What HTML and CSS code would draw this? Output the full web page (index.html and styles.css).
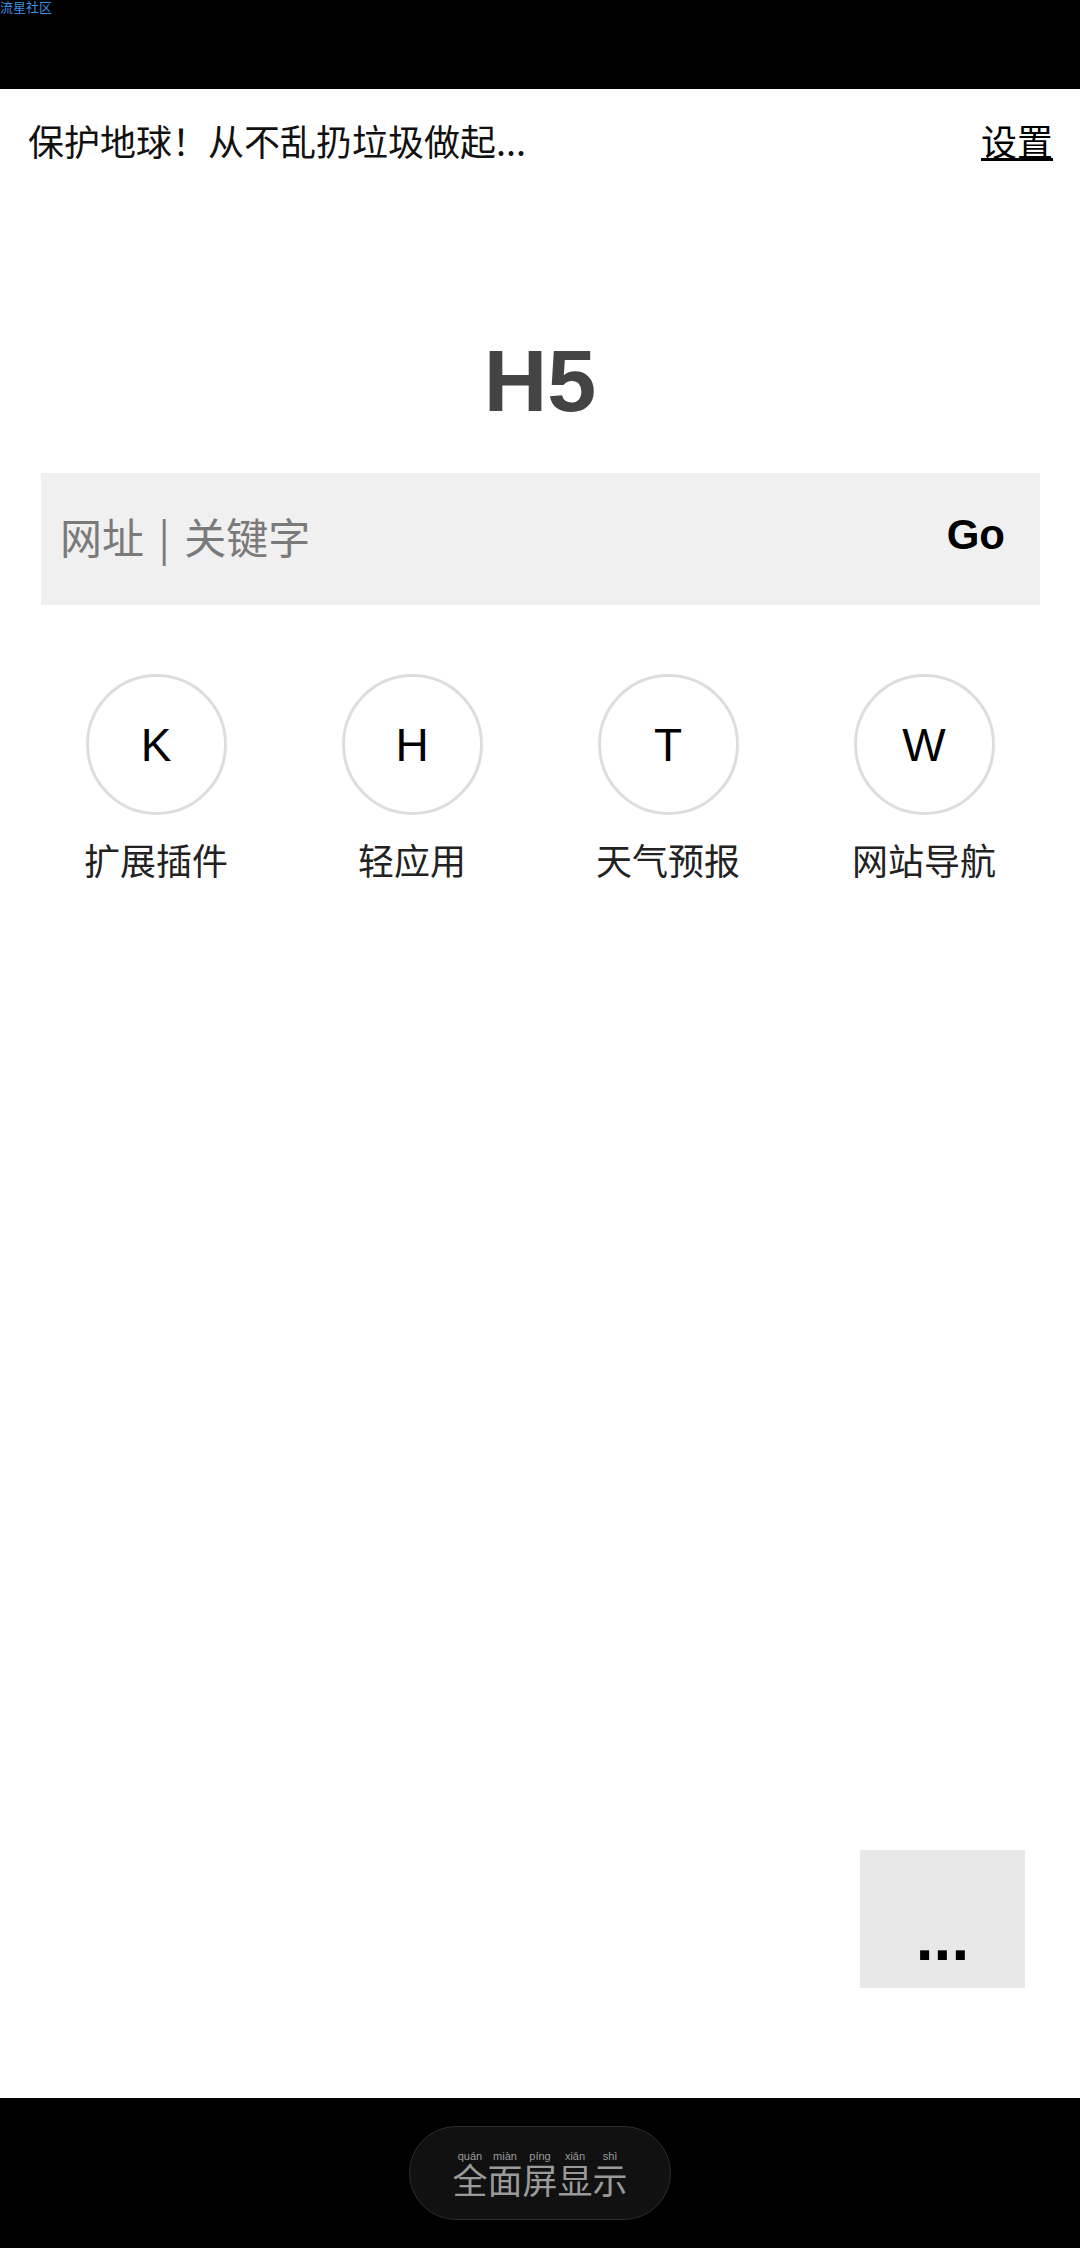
FILE: index.html
```html
<!DOCTYPE html>
<html lang="zh-CN">

<head>
    <meta charset="UTF-8">
    <meta name="viewport" content="width=device-width, initial-scale=1.0">
    <title>H5</title>
    <link rel="stylesheet" href="styles.css">
</head>

<body>
    <div class="status-bar">
        <span class="watermark">流星社区</span>
    </div>
    <div class="page">
        <div class="top-bar">
            <span class="slogan">保护地球！从不乱扔垃圾做起...</span>
            <a href="#" class="settings">设置</a>
        </div>
        <h1 class="logo">H5</h1>
        <form action="" class="search">
            <input type="text" class="search-input" placeholder="网址 | 关键字">
            <button class="search-go">Go</button>
        </form>
        <div class="shortcuts">
            <a href="#" class="shortcut">
                <span class="shortcut-icon">K</span>
                <span class="shortcut-name">扩展插件</span>
            </a>
            <a href="#" class="shortcut">
                <span class="shortcut-icon">H</span>
                <span class="shortcut-name">轻应用</span>
            </a>
            <a href="#" class="shortcut">
                <span class="shortcut-icon">T</span>
                <span class="shortcut-name">天气预报</span>
            </a>
            <a href="#" class="shortcut">
                <span class="shortcut-icon">W</span>
                <span class="shortcut-name">网站导航</span>
            </a>
        </div>
        <div class="more">...</div>
    </div>
    <div class="nav-bar">
        <div class="fullscreen">
            <span class="py"><span class="py-top">quán</span><span class="py-char">全</span></span>
            <span class="py"><span class="py-top">miàn</span><span class="py-char">面</span></span>
            <span class="py"><span class="py-top">píng</span><span class="py-char">屏</span></span>
            <span class="py"><span class="py-top">xiǎn</span><span class="py-char">显</span></span>
            <span class="py"><span class="py-top">shì</span><span class="py-char">示</span></span>
        </div>
    </div>
</body>

</html>
```

FILE: styles.css
```css
* {
    box-sizing: border-box;
}

body {
    margin: 0;
    width: 1080px;
    background: #fff;
    font-family: "Noto Sans CJK SC", "Noto Sans", sans-serif;
}

.status-bar {
    height: 89px;
    background: #000;
}

.watermark {
    display: block;
    font-size: 13px;
    line-height: 13px;
    color: #3d8fe0;
}

.page {
    height: 2009px;
    display: flex;
    flex-direction: column;
}

.top-bar {
    height: 102px;
    padding: 0 27px 0 28px;
    display: flex;
    justify-content: space-between;
    align-items: center;
    font-size: 36px;
}

.slogan {
    color: #111;
}

.settings {
    color: #000;
    text-decoration: underline;
}

.logo {
    margin: 140px 0 42px;
    font: 700 88px/100px "Liberation Sans", sans-serif;
    text-align: center;
    color: #444;
}

.search {
    height: 132px;
    margin: 0 40px 0 41px;
    padding: 0 35px 8px 19px;
    display: flex;
    align-items: center;
    background: #f0f0f0;
}

.search-input {
    flex: 1;
    border: none;
    outline: none;
    background: transparent;
    font-family: "Noto Sans CJK SC", sans-serif;
    font-size: 42px;
    color: #333;
    padding: 0;
}

.search-input::placeholder {
    color: #7a7a7a;
    word-spacing: 5px;
}

.search-go {
    border: none;
    background: transparent;
    padding: 0;
    font: 700 42px "Liberation Sans", sans-serif;
    color: #000;
}

.shortcuts {
    margin-top: 69px;
    padding: 0 28px;
    display: grid;
    grid-template-columns: repeat(4, 1fr);
}

.shortcut {
    display: flex;
    flex-direction: column;
    align-items: center;
    text-decoration: none;
    color: #222;
}

.shortcut-icon {
    width: 141px;
    height: 141px;
    border: 3px solid #ddd;
    border-radius: 50%;
    display: flex;
    justify-content: center;
    align-items: center;
    font: 46px "Liberation Sans", sans-serif;
    color: #000;
}

.shortcut-name {
    margin-top: 20px;
    font-size: 36px;
    line-height: 48px;
}

.more {
    margin: auto 55px 110px 0;
    align-self: flex-end;
    width: 165px;
    height: 138px;
    padding-bottom: 18px;
    display: flex;
    justify-content: center;
    align-items: flex-end;
    background: #e8e8e8;
    font: 700 64px/1 "Liberation Sans", sans-serif;
    color: #000;
}

.nav-bar {
    height: 150px;
    background: #000;
    display: flex;
    justify-content: center;
    align-items: center;
}

.fullscreen {
    width: 262px;
    height: 94px;
    border-radius: 47px;
    border: 1px solid #2c2c2c;
    background: #111;
    display: flex;
    justify-content: center;
    align-items: center;
    padding-top: 5px;
    color: #9a9a9a;
}

.py {
    width: 35px;
    display: flex;
    flex-direction: column;
    align-items: center;
}

.py-top {
    font-family: "Liberation Sans", sans-serif;
    font-size: 11px;
    line-height: 12px;
}

.py-char {
    font-family: "Liberation Sans", "Noto Sans CJK SC", sans-serif;
    font-size: 35px;
    line-height: 40px;
}
```
